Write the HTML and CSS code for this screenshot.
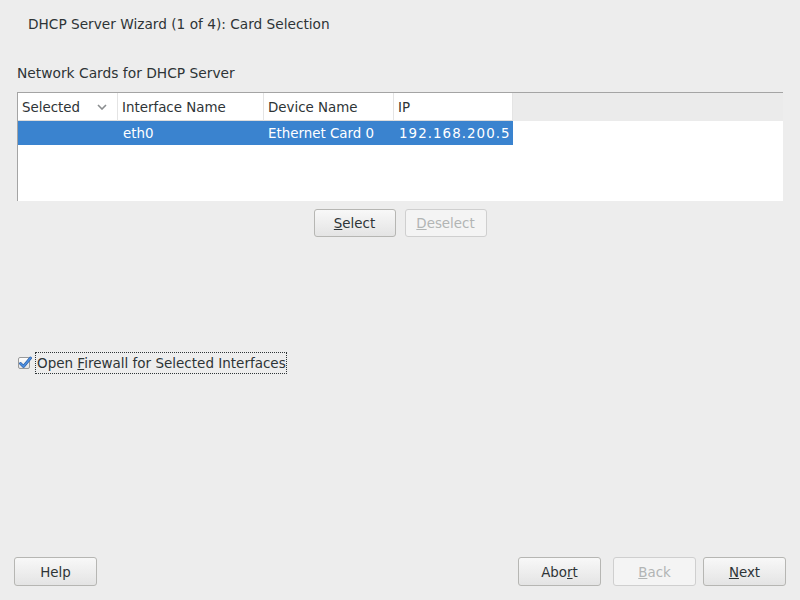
FILE: index.html
```html
<!DOCTYPE html>
<html>
<head>
<meta charset="utf-8">
<link rel="stylesheet" href="styles.css">
</head>
<body>
<div class="window">
  <div class="title">DHCP Server Wizard (1 of 4): Card Selection</div>
  <div class="content">
    <div class="group-label">Network Cards for DHCP Server</div>
    <div class="table-frame">
      <div class="thead">
        <div class="th c1">Selected<svg class="chev" width="10" height="6" viewBox="0 0 10 6"><path d="M1 1 L5 5 L9 1" fill="none" stroke="#8a8d8f" stroke-width="1.6"/></svg></div>
        <div class="th c2">Interface Name</div>
        <div class="th c3">Device Name</div>
        <div class="th c4">IP</div>
        <div class="th-fill"></div>
      </div>
      <div class="row selected">
        <div class="td c1"></div>
        <div class="td c2">eth0</div>
        <div class="td c3">Ethernet Card 0</div>
        <div class="td c4 ip">192.168.200.5</div>
      </div>
    </div>
    <div class="btn-row">
      <button class="btn"><u>S</u>elect</button>
      <button class="btn disabled"><u>D</u>eselect</button>
    </div>
    <div class="check-row">
      <svg class="checkbox" width="14" height="14" viewBox="0 0 14 14">
        <defs>
          <linearGradient id="cb" x1="0" y1="0" x2="0" y2="1">
            <stop offset="0" stop-color="#ffffff"/>
            <stop offset="1" stop-color="#e2e2e2"/>
          </linearGradient>
        </defs>
        <rect x="0.5" y="1.5" width="11" height="11" rx="1.5" fill="url(#cb)" stroke="#9a9a9a"/>
        <path d="M2.5 7.5 L5.5 10.5 L12.5 2" fill="none" stroke="#2a5fa8" stroke-width="2.8" stroke-linecap="round" stroke-linejoin="round"/>
        <path d="M2.5 7.5 L5.5 10.5 L12.5 2" fill="none" stroke="#4d8fe0" stroke-width="1.6" stroke-linecap="round" stroke-linejoin="round"/>
      </svg>
      <span class="check-label">Open <u>F</u>irewall for Selected Interfaces</span>
    </div>
  </div>
  <div class="footer">
    <button class="btn">Help</button>
    <div class="spacer"></div>
    <button class="btn">Abo<u>r</u>t</button>
    <button class="btn disabled back"><u>B</u>ack</button>
    <button class="btn next"><u>N</u>ext</button>
  </div>
</div>
</body>
</html>
```
FILE: styles.css
```css
html, body {
  margin: 0;
  padding: 0;
  background: #ededed;
}
body {
  font-family: "DejaVu Sans", "Noto Sans", sans-serif;
  font-size: 13px;
  color: #2e3436;
}
.window {
  width: 800px;
  height: 600px;
  display: flex;
  flex-direction: column;
}
.title {
  padding: 16px 0 0 28px;
  line-height: 17px;
  font-size: 13.7px;
}
.content {
  flex: 1;
  padding: 0 17px;
  display: flex;
  flex-direction: column;
}
.group-label {
  margin-top: 32px;
  line-height: 17px;
  font-size: 13.8px;
}
.table-frame {
  margin-top: 10px;
  height: 108px;
  background: #ffffff;
  border-top: 1px solid #a4a4a4;
  border-left: 1px solid #a4a4a4;
  font-size: 13.4px;
}
.thead {
  display: flex;
  height: 28px;
}
.th {
  box-sizing: border-box;
  height: 28px;
  line-height: 26px;
  padding-top: 2px;
  padding-left: 4px;
  background: #ffffff;
  border-right: 1px solid #e4e4e4;
  border-bottom: 1px solid #dcdcdc;
  position: relative;
  white-space: nowrap;
}
.th-fill {
  flex: 1;
  height: 28px;
  background: #ebebeb;
}
.c1 { width: 100px; box-sizing: border-box; }
.c2 { width: 146px; box-sizing: border-box; }
.c3 { width: 130px; box-sizing: border-box; }
.c4 { width: 119px; box-sizing: border-box; }
.chev {
  position: absolute;
  left: 79px;
  top: 11px;
}
.row {
  display: flex;
  height: 24px;
}
.row.selected .td {
  background: #3a83cf;
  color: #ffffff;
}
.td {
  height: 24px;
  line-height: 24px;
  padding-top: 1px;
  box-sizing: border-box;
  padding-left: 4px;
  white-space: nowrap;
}
.td.c2 { padding-left: 5px; }
.td.c3 { padding-left: 4px; }
.td.ip { padding-left: 5px; letter-spacing: 1.05px; }
.btn-row {
  display: flex;
  justify-content: center;
  gap: 9px;
  margin-top: 8px;
}
.btn {
  box-sizing: border-box;
  width: 82px;
  height: 28px;
  font-family: inherit;
  font-size: 13.4px;
  color: #2e3436;
  border: 1px solid #b6b6b3;
  border-radius: 3px;
  background: linear-gradient(to bottom, #f8f8f8, #e4e4e4);
  padding: 2px 0 0 0;
  line-height: 24px;
}
.btn.disabled {
  color: #b2b5b4;
  background: #f4f4f4;
  border-color: #cfcfcf;
}
.check-row {
  margin-top: 115px;
  display: flex;
  align-items: center;
  margin-left: 1px;
}
.checkbox {
  margin-right: 3px;
}
.check-label {
  border: 1px dotted #2e3436;
  padding: 2px 0 2px 1px;
  line-height: 16px;
  font-size: 13.5px;
}
.footer {
  display: flex;
  padding: 0 14px 14px 14px;
  gap: 12px;
}
.footer .btn {
  width: 83px;
  height: 29px;
}
.spacer { flex: 1; }
.footer .next { margin-left: -5px; }
```
